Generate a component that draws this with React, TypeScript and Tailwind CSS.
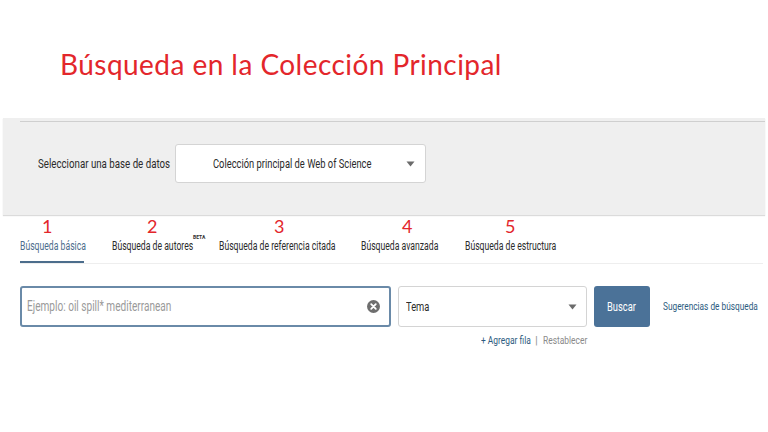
import React from 'react';
import type { ReactNode } from 'react';

const TITLE_FONT = "font-['Lato','Open_Sans',sans-serif]";
const UI_FONT = "font-['Roboto','Liberation_Sans',sans-serif]";

// the UI text in the picture is a narrow face: Roboto squeezed to match
const Narrow = ({ box, children }: { box: string; children: ReactNode }) => (
  <span className={`inline-block shrink-0 ${box}`}>
    <span className="inline-block origin-left scale-x-[0.72] whitespace-nowrap">{children}</span>
  </span>
);

const Caret = () => (
  <svg width="9" height="6" viewBox="0 0 9 6" aria-hidden="true">
    <path d="M0.5 0.5h8L4.5 5.5z" fill="#6b6b6b" />
  </svg>
);

const ClearIcon = () => (
  <svg width="13" height="13" viewBox="0 0 13 13" aria-hidden="true">
    <circle cx="6.5" cy="6.5" r="6.5" fill="#6e6e6e" />
    <path d="M4.2 4.2l4.6 4.6M8.8 4.2l-4.6 4.6" stroke="#fff" strokeWidth="1.8" strokeLinecap="round" />
  </svg>
);

type Tab = {
  num: string;
  label: string;
  beta?: boolean;
  active?: boolean;
  box: string;
  textBox: string;
  numPad: string;
};

const tabs: Tab[] = [
  { num: '1', label: 'Búsqueda básica', active: true, box: 'w-[64px]', textBox: 'w-[64px]', numPad: 'pl-[22px]' },
  { num: '2', label: 'Búsqueda de autores', beta: true, box: 'ml-[28px] w-[90px]', textBox: 'w-[81px]', numPad: 'pl-[35px]' },
  { num: '3', label: 'Búsqueda de referencia citada', box: 'ml-[17px] w-[115px]', textBox: 'w-[115px]', numPad: 'pl-[55px]' },
  { num: '4', label: 'Búsqueda avanzada', box: 'ml-[27px] w-[76px]', textBox: 'w-[76px]', numPad: 'pl-[41px]' },
  { num: '5', label: 'Búsqueda de estructura', box: 'ml-[28px] w-[90px]', textBox: 'w-[90px]', numPad: 'pl-[40px]' },
];

const App = () => {
  return (
    <div className={`flex h-[432px] w-[768px] flex-col overflow-hidden bg-white ${UI_FONT}`}>
      <div className="flex h-[118px] items-start pl-[60px] pt-[47px]">
        <h1 className={`${TITLE_FONT} text-[28px] leading-[34px] tracking-[0.45px] text-[#e3262b]`}>
          Búsqueda en la Colección Principal
        </h1>
      </div>

      <div className="mx-[3px] flex h-[97px] shrink-0 flex-col bg-[#efefef] shadow-[0_1px_1px_rgba(0,0,0,0.14)]">
        <div className="ml-[17px] mt-[3px] h-[1px] bg-[#cfcfcf]" />
        <div className="flex items-center pl-[35px] pt-[22px]">
          <span className="w-[137px] shrink-0 text-[13.5px] text-[#2b2b2b]">
            <Narrow box="w-[132px]">Seleccionar una base de datos</Narrow>
          </span>
          <div className="flex h-[39px] w-[251px] shrink-0 items-center rounded-[3px] border border-[#d4d4d4] bg-white pl-[37px] pr-[10px]">
            <span className="flex-1 text-[13px] text-[#2b2b2b]">
              <Narrow box="w-[159px]">Colección principal de Web of Science</Narrow>
            </span>
            <Caret />
          </div>
        </div>
      </div>

      <div className="flex h-[48px] shrink-0 pl-[20px]">
        {tabs.map((tab) => (
          <div key={tab.num} className={`flex shrink-0 flex-col ${tab.box}`}>
            <span className={`${TITLE_FONT} h-[22px] text-[18px] leading-[22px] text-[#e3262b] ${tab.numPad}`}>
              {tab.num}
            </span>
            <div className="mt-[2px] flex items-start text-[12px] leading-[15px]">
              <span className={tab.active ? 'text-[#4c6d8c]' : 'text-[#2b2b2b]'}>
                <Narrow box={tab.textBox}>{tab.label}</Narrow>
              </span>
              {tab.beta && (
                <span className="mt-[-5px] text-[5px] font-bold leading-[6px] text-[#333]">BETA</span>
              )}
            </div>
            {tab.active && <div className="mt-[7px] h-[3px] w-[64px] bg-[#4c6d8c]" />}
          </div>
        ))}
      </div>
      <div className="ml-[20px] mr-[5px] h-[1px] shrink-0 bg-[#eeeeee]" />

      <div className="flex items-center pl-[20px] pt-[22px]">
        <div className="flex h-[41px] w-[371px] shrink-0 items-center rounded-[3px] border-2 border-[#6a8aa8] pl-[5px] pr-[9px]">
          <span className="flex-1 text-[14px] text-[#9a9a9a]">
            <Narrow box="w-[146px]">Ejemplo: oil spill* mediterranean</Narrow>
          </span>
          <ClearIcon />
        </div>
        <div className="ml-[7px] flex h-[41px] w-[189px] shrink-0 items-center rounded-[3px] border border-[#d4d4d4] pl-[7px] pr-[9px]">
          <span className="flex-1 text-[13px] text-[#2b2b2b]">
            <Narrow box="w-[22px]">Tema</Narrow>
          </span>
          <Caret />
        </div>
        <button className="ml-[7px] flex h-[41px] w-[56px] shrink-0 items-center justify-center rounded-[3px] bg-[#4b7298] text-[13px] text-white">
          <Narrow box="w-[30px]">Buscar</Narrow>
        </button>
        <span className="ml-[13px] text-[11.5px] text-[#2d5b80]">
          <Narrow box="w-[94px]">Sugerencias de búsqueda</Narrow>
        </span>
      </div>

      <div className="flex items-center pl-[481px] pt-[5px] text-[11.7px]">
        <span className="text-[#2d5b80]">
          <Narrow box="w-[49px]">+ Agregar fila</Narrow>
        </span>
        <span className="mx-[5px] text-[#999]">|</span>
        <span className="text-[#8a8a8a]">
          <Narrow box="w-[43px]">Restablecer</Narrow>
        </span>
      </div>
    </div>
  );
};

export default App;
